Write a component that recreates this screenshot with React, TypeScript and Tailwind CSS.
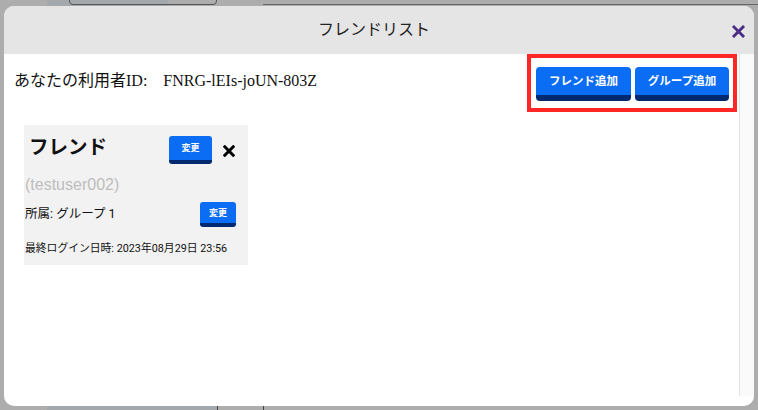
import React from "react";

const serif = { fontFamily: '"Liberation Serif", "Noto Sans CJK JP", serif' };

function XIcon({ size, stroke, color }: { size: number; stroke: number; color: string }) {
  return (
    <svg width={size} height={size} viewBox="0 0 10 10" className="block">
      <path d="M1.5 1.5 L8.5 8.5 M8.5 1.5 L1.5 8.5" stroke={color} strokeWidth={stroke} strokeLinecap="square" />
    </svg>
  );
}

export default function App() {
  return (
    <div className="relative w-[758px] h-[410px] overflow-hidden bg-[#adadad]">
      {/* backdrop remnants */}
      <div className="absolute left-[47px] top-0 w-[121px] h-[6px] bg-[#a3a8ad]" />
      <div className="absolute left-[69px] top-[-10px] w-[148px] h-[15px] rounded-[4px] border border-[#555]" />
      <div className="absolute left-[263px] top-[4px] w-[495px] h-[1px] bg-[#666]" />
      <div className="absolute left-[47px] top-[404px] w-[170px] h-[6px] bg-[#a3a8ad]" />
      <div className="absolute left-[217px] top-[404px] w-[1px] h-[6px] bg-[#444]" />
      <div className="absolute left-[263px] top-[404px] w-[1px] h-[6px] bg-[#444]" />

      <div className="relative ml-[4px] mt-[6px] w-[750px] h-[400px] rounded-[10px] bg-white overflow-hidden flex flex-col">
        <div className="relative h-[48px] shrink-0 bg-[#e5e5e5] flex items-center justify-center pr-[10px]">
          <span className="text-[16px] text-[#222]" style={serif}>フレンドリスト</span>
          <span className="absolute right-[9px] top-[19px]">
            <XIcon size={13} stroke={2.2} color="#4a2c86" />
          </span>
        </div>
        <div className="flex flex-1 min-h-0">
          <div className="flex-1 flex flex-col">
            <div className="flex items-start justify-between">
              <div className="pl-[10px] pt-[15px] text-[16px] text-[#111] flex" style={serif}>
                <span>あなたの利用者ID:</span>
                <span className="ml-[16px]">FNRG-lEIs-joUN-803Z</span>
              </div>
              <div className="mr-[2px] border-[4px] border-[#ff2626] pt-[9px] pb-[7px] pl-[5px] pr-[4px] flex gap-[4px]">
                <Btn w="w-[95px]">フレンド追加</Btn>
                <Btn w="w-[94px]">グループ追加</Btn>
              </div>
            </div>
            <div
              className="ml-[20px] mt-[13px] w-[224px] h-[140px] bg-[#f2f2f2] pl-[1px] pr-[12px] pt-[11px]"
              style={{ fontFamily: 'Roboto, "Noto Sans CJK JP", sans-serif' }}
            >
              <div className="flex items-center">
                <span className="ml-[4px] text-[19.5px] font-bold text-[#111] leading-[24px] mt-[-4px]">フレンド</span>
                <div className="ml-auto flex items-center">
                  <SmallBtn w="w-[43px]" h="h-[28px]">変更</SmallBtn>
                  <span className="ml-[11px] mt-[2px] mr-[1px]">
                    <XIcon size={12} stroke={2.5} color="#000" />
                  </span>
                </div>
              </div>
              <div className="mt-[11px] text-[16px] text-[#bdbdbd] leading-[20px]" style={{ fontFamily: '"Liberation Sans", sans-serif' }}>
                (testuser002)
              </div>
              <div className="mt-[7px] flex items-center">
                <span className="text-[12.5px] text-[#111]">所属: グループ 1</span>
                <div className="ml-auto">
                  <SmallBtn w="w-[36px]" h="h-[25px]">変更</SmallBtn>
                </div>
              </div>
              <div className="mt-[14px] text-[10.8px] text-[#111]">最終ログイン日時: 2023年08月29日 23:56</div>
            </div>
          </div>
          <div className="w-[15px] shrink-0 bg-[#fafafa] border-l border-[#e3e3e3] mb-[10px]" />
        </div>
      </div>
    </div>
  );
}

function Btn({ children, w }: { children: React.ReactNode; w: string }) {
  return (
    <div
      className={`${w} h-[34px] rounded-[4px] bg-[#0b6cf4] border-b-[6px] border-[#00296f] flex items-center justify-center text-white text-[11.5px] font-bold`}
      style={{ fontFamily: '"Noto Sans CJK JP", sans-serif' }}
    >
      {children}
    </div>
  );
}

function SmallBtn({ children, w, h }: { children: React.ReactNode; w: string; h: string }) {
  return (
    <div
      className={`${w} ${h} rounded-[3px] bg-[#0b6cf4] border-b-[4px] border-[#00296f] flex items-center justify-center text-white text-[9px] font-bold`}
      style={{ fontFamily: '"Noto Sans CJK JP", sans-serif' }}
    >
      {children}
    </div>
  );
}
